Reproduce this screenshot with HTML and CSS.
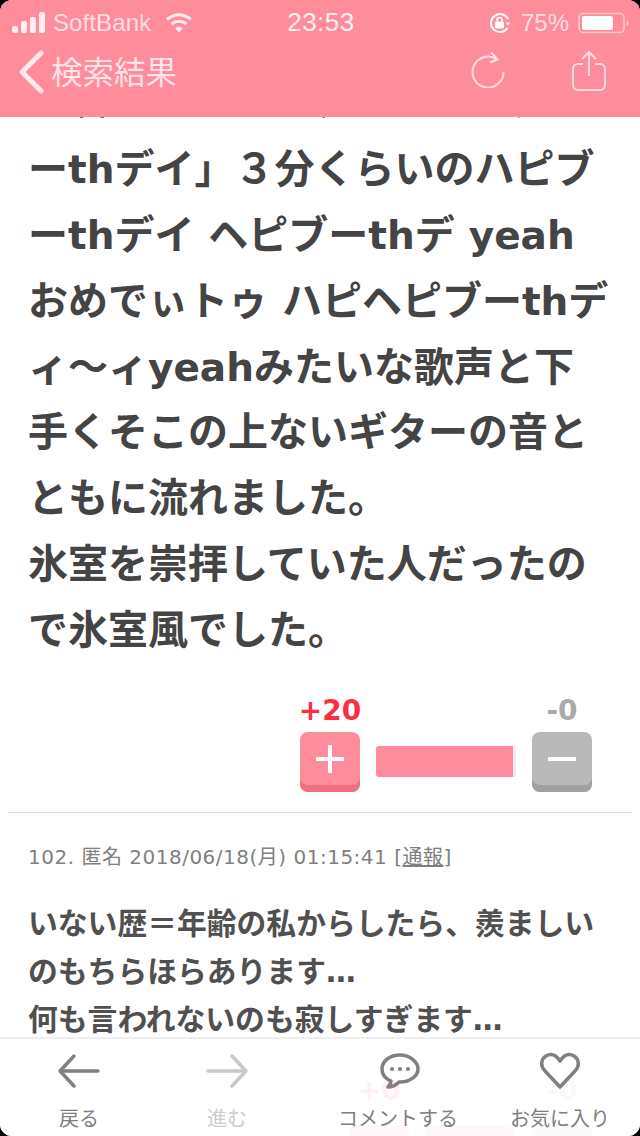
FILE: index.html
```html
<!DOCTYPE html>
<html lang="ja">
<head>
<meta charset="utf-8">
<title>検索結果</title>
<link rel="stylesheet" href="styles.css">
</head>
<body>
<div class="screen">
  <header class="header">
    <div class="status">
      <div class="status-left">
        <svg class="signal" width="46" height="24" viewBox="0 0 46 24"><rect x="0" y="15" width="6" height="7" rx="2"/><rect x="9" y="10" width="6" height="12" rx="2"/><rect x="18" y="6" width="6" height="16" rx="2"/><rect x="27" y="1" width="6" height="21" rx="2"/></svg>
        <span class="carrier">SoftBank</span>
        <svg class="wifi" width="28" height="22" viewBox="0 0 28 22"><path d="M2 7.500C9.500 1 18.500 1 26 7.500M6.500 12C11 8.200 17 8.200 21.500 12" fill="none" stroke="#ffeef0" stroke-width="3"/><path d="M10.500 16.200C12.500 14.400 15.500 14.400 17.500 16.200L14 20.500Z" fill="#ffeef0"/></svg>
      </div>
      <span class="clock">23:53</span>
      <div class="status-right">
        <svg width="24" height="24" viewBox="0 0 24 24"><path d="M20 8A9 9 0 1 0 19.500 17" fill="none" stroke="#fff" stroke-width="2"/><path d="M17.500 11.500h5l-2.500 3z" fill="#fff"/><rect x="7" y="10.500" width="9" height="7" rx="1" fill="#fff"/><path d="M9 10.500V9a2.500 2.500 0 0 1 5 0v1.500" fill="none" stroke="#fff" stroke-width="1.500"/></svg>
        <span class="percent">75%</span>
        <svg width="52" height="22" viewBox="0 0 52 22"><rect x="1" y="1.500" width="45" height="19" rx="4" fill="none" stroke="#ffc9cf" stroke-width="1.500"/><rect x="4" y="4" width="31" height="14" rx="2" fill="#fff"/><path d="M48.500 8v6c1.500-.5 2-1.500 2-3s-.5-2.500-2-3z" fill="#ffc9cf"/></svg>
      </div>
    </div>
    <nav class="nav">
      <div class="back">
        <svg width="28" height="46" viewBox="0 0 28 46"><path d="M24 4L5 23l19 19" fill="none" stroke="#ffeaec" stroke-width="5" stroke-linecap="round" stroke-linejoin="round"/></svg>
        <span class="back-label">検索結果</span>
      </div>
      <div class="nav-actions">
        <svg width="34" height="38" viewBox="0 0 34 38"><path d="M26 9.500A15.500 15.500 0 1 0 32.500 22" fill="none" stroke="#ffdfe3" stroke-width="2"/><path d="M20 2.500l7 7-8 3" fill="none" stroke="#ffdfe3" stroke-width="2"/></svg>
        <svg width="34" height="41" viewBox="0 0 34 41"><path d="M11 14H6a5 5 0 0 0-5 5v16a5 5 0 0 0 5 5h22a5 5 0 0 0 5-5V19a5 5 0 0 0-5-5h-5M17 26V2M10 9l7-7 7 7" fill="none" stroke="#ffdfe3" stroke-width="2"/></svg>
      </div>
    </nav>
  </header>
  <main class="content">
    <p class="body-large"><span class="clipped-line">の友人から「ハッピバースデ</span>ー<span class="latin">th</span>デイ」３分くらいのハピブ<br>ー<span class="latin">th</span>デイ ヘピブー<span class="latin">th</span>デ <span class="latin">yeah</span><br>おめでぃトゥ ハピヘピブー<span class="latin">th</span>デ<br>ィ〜ィ<span class="latin">yeah</span>みたいな歌声と下<br>手くそこの上ないギターの音と<br>ともに流れました。<br>氷室を崇拝していた人だったの<br>で氷室風でした。</p>
    <div class="votes">
      <div class="vote-column">
        <span class="count count-plus">+20</span>
        <div class="vote-btn vote-plus"><svg width="30" height="30" viewBox="0 0 30 30"><path d="M15 1v28M1 15h28" stroke="#fff" stroke-width="4"/></svg></div>
      </div>
      <div class="bar" style="width:137px"></div>
      <div class="vote-column">
        <span class="count count-minus">-0</span>
        <div class="vote-btn vote-minus"><svg width="30" height="30" viewBox="0 0 30 30"><path d="M1 15h28" stroke="#fff" stroke-width="4"/></svg></div>
      </div>
    </div>
    <hr class="divider">
    <div class="meta">102. 匿名 2018/06/18(月) 01:15:41 [<span class="report">通報</span>]</div>
    <p class="body-small">いない歴＝年齢の私からしたら、羨ましい<br>のもちらほらあります…<br>何も言われないのも寂しすぎます…</p>
    <div class="votes votes-next">
      <div class="vote-column">
        <span class="count count-plus">+0</span>
        <div class="vote-btn vote-plus"></div>
      </div>
      <div class="bar" style="width:88px"></div>
      <div class="vote-column">
        <span class="count count-minus">-0</span>
        <div class="vote-btn vote-minus"></div>
      </div>
    </div>
  </main>
  <footer class="tabbar">
    <div class="tab">
      <svg width="44" height="34" viewBox="0 0 44 34"><path d="M41 17H3M17 2L3 17l14 15" fill="none" stroke="#808080" stroke-width="3.500" stroke-linecap="round" stroke-linejoin="round"/></svg>
      <span>戻る</span>
    </div>
    <div class="tab tab-off">
      <svg width="44" height="34" viewBox="0 0 44 34"><path d="M3 17h38M27 2l14 15-14 15" fill="none" stroke="#c8c8c8" stroke-width="3.500" stroke-linecap="round" stroke-linejoin="round"/></svg>
      <span>進む</span>
    </div>
    <div class="tab">
      <svg class="icon-comment" width="44" height="38" viewBox="0 0 44 38"><path d="M22 3C12 3 4 9 4 17c0 6 4 10 9 12 0 2-1 4-3 6 4 0 8-2 11-5h1c10 0 18-6 18-13S32 3 22 3z" fill="none" stroke="#808080" stroke-width="3.500" stroke-linejoin="round"/><circle cx="14" cy="17" r="2" fill="#808080"/><circle cx="22" cy="17" r="2" fill="#808080"/><circle cx="30" cy="17" r="2" fill="#808080"/></svg>
      <span>コメントする</span>
    </div>
    <div class="tab">
      <svg width="44" height="38" viewBox="0 0 44 38"><path d="M22 35L7 19C2 14 3 7 8 4c5-3 10-1 14 5 4-6 9-8 14-5 5 3 6 10 1 15z" fill="none" stroke="#808080" stroke-width="3.500" stroke-linejoin="round"/></svg>
      <span>お気に入り</span>
    </div>
  </footer>
</div>
</body>
</html>
```

FILE: styles.css
```css
* { box-sizing: border-box; }
html, body { margin: 0; padding: 0; background: #000; }
body { width: 640px; height: 1136px; overflow: hidden; }
.screen {
  position: relative;
  width: 640px;
  height: 1136px;
  display: flex;
  flex-direction: column;
  overflow: hidden;
  background: #fff;
  border-radius: 12px;
  font-family: "DejaVu Sans", "Noto Sans CJK JP", sans-serif;
}
.header {
  position: relative;
  z-index: 2;
  flex: none;
  height: 117px;
  background: #ff8c9a;
  display: flex;
  flex-direction: column;
}
.status {
  height: 42px;
  padding: 3px 10px 0 12px;
  display: grid;
  grid-template-columns: 1fr auto 1fr;
  align-items: center;
  color: #fff;
}
.status-left, .status-right { display: flex; align-items: center; }
.status-right { justify-content: flex-end; gap: 9px; }
.signal { fill: #ffeef0; margin-right: -5px; }
.carrier, .percent, .clock { font-family: "Liberation Sans", sans-serif; }
.carrier { font-size: 24px; color: #ffdfe3; margin-right: 14px; letter-spacing: .1px; }
.clock { font-size: 26px; color: #ffeef0; letter-spacing: .5px; }
.percent { font-size: 24px; color: #ffdfe3; }
.nav {
  flex: 1;
  display: flex;
  align-items: flex-start;
  justify-content: space-between;
  padding: 6px 34px 0 17px;
}
.back { display: flex; align-items: center; gap: 6px; }
.back-label { font-family: "Noto Sans CJK JP", sans-serif; font-size: 31.500px; line-height: 44px; margin-bottom: 4px; color: #ffe3e6; font-weight: 400; }
.nav-actions { display: flex; align-items: flex-start; gap: 67px; padding-top: 2px; }
.content { flex: 1; overflow: hidden; padding: 0 28px; color: #444; }
.body-large {
  margin: -49.500px 0 0;
  font-size: 40px;
  line-height: 65.800px;
  font-weight: 700;
  white-space: nowrap;
}
.clipped-line { display: block; margin-bottom: 4px; }
.latin { font-size: 39px; }
.votes {
  display: flex;
  justify-content: flex-end;
  align-items: flex-end;
  gap: 16px;
  margin-top: 30px;
  padding-right: 20px;
}
.vote-column { display: flex; flex-direction: column; align-items: center; gap: 4px; width: 60px; }
.count { font-size: 28px; line-height: 34px; font-weight: 700; white-space: nowrap; }
.count-plus { color: #ff2d3f; }
.count-minus { color: #aaa; }
.vote-btn {
  width: 60px;
  height: 60px;
  border-radius: 8px;
  display: flex;
  align-items: center;
  justify-content: center;
  padding-bottom: 6px;
}
.vote-plus { background: #ff8c9a; box-shadow: inset 0 -7px 0 #f0707f; }
.vote-minus { background: #b9b9b9; box-shadow: inset 0 -7px 0 #a0a0a0; }
.bar { height: 31px; margin: 0 3px 15px 0; background: #ff8c9a; border-radius: 3px 0 0 3px; box-shadow: 3px 0 0 #eee; }
.divider { margin: 20px -20px 0; border: 0; border-top: 1px solid #ddd; }
.meta { margin-top: 30px; font-size: 20px; line-height: 28px; letter-spacing: .5px; color: #808080; white-space: nowrap; }
.report { text-decoration: underline; }
.body-small {
  margin: 29px 0 0;
  font-size: 29.800px;
  line-height: 48px;
  font-weight: 700;
  color: #505050;
  white-space: nowrap;
}
.votes-next { margin-top: 30px; }
.votes-next .vote-column { gap: 17px; }
.votes-next .bar { margin-bottom: 29px; }
.tabbar {
  position: absolute;
  left: 0;
  right: 0;
  bottom: 0;
  height: 99px;
  padding: 13px 20px 0 0;
  display: grid;
  grid-template-columns: 158px 138px 204px 120px;
  background: rgba(255, 255, 255, .93);
  border-top: 2px solid #eee;
}
.tab { display: flex; flex-direction: column; align-items: center; color: #808080; font-family: "Noto Sans CJK JP", sans-serif; font-size: 20px; line-height: 28px; white-space: nowrap; }
.tab svg { height: 38px; margin-bottom: 14px; }
.tab .icon-comment { margin-left: 4px; }
.tab-off { color: #ccc; }
```
